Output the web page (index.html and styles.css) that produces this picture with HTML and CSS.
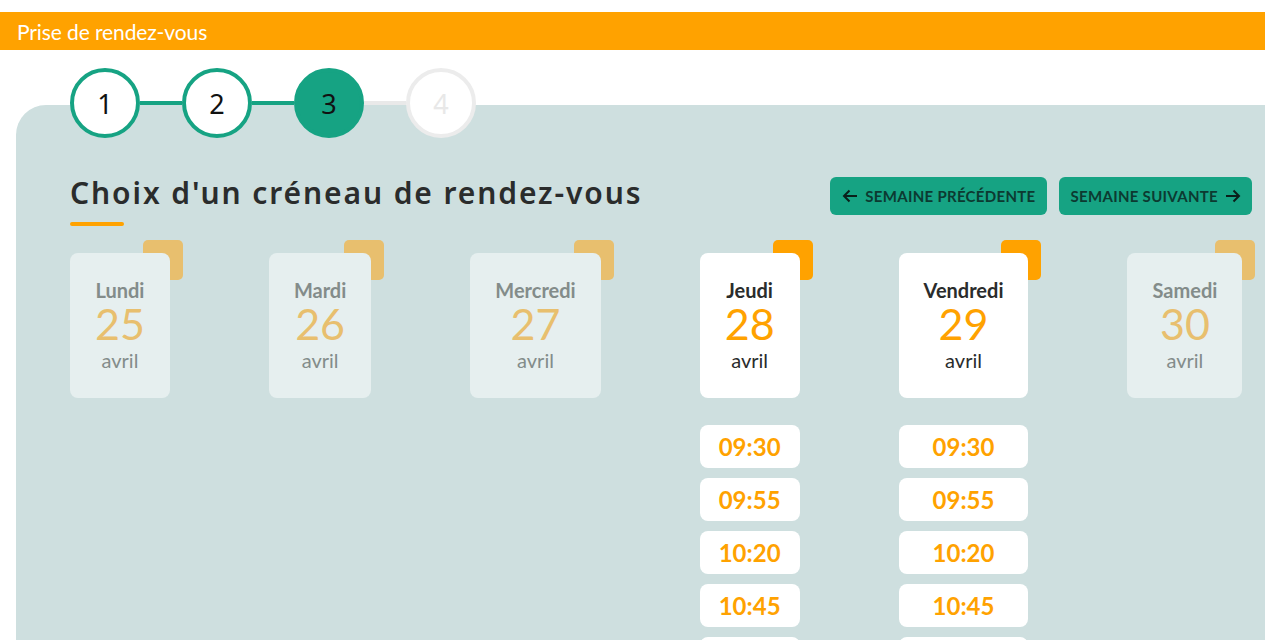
FILE: index.html
```html
<!DOCTYPE html>
<html lang="fr">
<head>
<meta charset="utf-8">
<title>Prise de rendez-vous</title>
<link rel="stylesheet" href="styles.css">
</head>
<body>
<header class="topbar">Prise de rendez-vous</header>

<div class="stepper">
  <div class="step done">1</div>
  <div class="step-line done"></div>
  <div class="step done">2</div>
  <div class="step-line done"></div>
  <div class="step current">3</div>
  <div class="step-line"></div>
  <div class="step todo">4</div>
</div>

<main class="panel">
  <div class="title-row">
    <h1 class="title">Choix d'un créneau de rendez-vous</h1>
    <div class="week-nav">
      <button class="btn"><svg class="arrow" viewBox="0 0 16 14" width="16" height="14"><path d="M15 7H2M7.5 1.5L2 7l5.5 5.5" fill="none" stroke="currentColor" stroke-width="2"/></svg>SEMAINE PRÉCÉDENTE</button>
      <button class="btn">SEMAINE SUIVANTE<svg class="arrow" viewBox="0 0 16 14" width="16" height="14"><path d="M1 7h13M8.5 1.5L14 7l-5.5 5.5" fill="none" stroke="currentColor" stroke-width="2"/></svg></button>
    </div>
  </div>
  <div class="title-bar"></div>

  <div class="days">
    <div class="day">
      <div class="card"><div class="d-name">Lundi</div><div class="d-num">25</div><div class="d-month">avril</div></div>
    </div>
    <div class="day">
      <div class="card"><div class="d-name">Mardi</div><div class="d-num">26</div><div class="d-month">avril</div></div>
    </div>
    <div class="day">
      <div class="card"><div class="d-name">Mercredi</div><div class="d-num">27</div><div class="d-month">avril</div></div>
    </div>
    <div class="day">
      <div class="card active"><div class="d-name">Jeudi</div><div class="d-num">28</div><div class="d-month">avril</div></div>
      <div class="slots">
        <div class="slot">09:30</div>
        <div class="slot">09:55</div>
        <div class="slot">10:20</div>
        <div class="slot">10:45</div>
        <div class="slot">11:10</div>
      </div>
    </div>
    <div class="day">
      <div class="card active"><div class="d-name">Vendredi</div><div class="d-num">29</div><div class="d-month">avril</div></div>
      <div class="slots">
        <div class="slot">09:30</div>
        <div class="slot">09:55</div>
        <div class="slot">10:20</div>
        <div class="slot">10:45</div>
        <div class="slot">11:10</div>
      </div>
    </div>
    <div class="day">
      <div class="card"><div class="d-name">Samedi</div><div class="d-num">30</div><div class="d-month">avril</div></div>
    </div>
    <div class="day">
      <div class="card"><div class="d-name">Dimanche</div><div class="d-num">1</div><div class="d-month">mai</div></div>
    </div>
  </div>
</main>
</body>
</html>
```

FILE: styles.css
```css
html, body {
  margin: 0;
  padding: 0;
}
body {
  padding-top: 12px;
  background: #ffffff;
  font-family: Lato, "Noto Sans", sans-serif;
  overflow: hidden;
  height: 628px;
}

.topbar {
  height: 38px;
  line-height: 40px;
  background: #ffa200;
  color: #ffffff;
  padding-left: 17px;
  font-family: Lato, sans-serif;
  font-size: 21px;
  letter-spacing: -0.1px;
}

.stepper {
  position: relative;
  z-index: 1;
  display: flex;
  align-items: center;
  width: max-content;
  margin: 18px 0 0 70px;
  height: 70px;
}
.step {
  width: 70px;
  height: 70px;
  box-sizing: border-box;
  border-radius: 50%;
  border: 4px solid #16a383;
  background: #ffffff;
  display: flex;
  align-items: center;
  justify-content: center;
  font-family: "Noto Sans", sans-serif;
  font-size: 27px;
  color: #111111;
}
.step.current {
  background: #16a383;
}
.step.todo {
  border-color: #ececec;
  color: #e8e8e8;
}
.step-line {
  width: 42px;
  height: 4px;
  background: #e9e9e9;
}
.step-line.done {
  background: #16a383;
}

.panel {
  position: relative;
  z-index: 0;
  margin: -33px 0 0 16px;
  background: #cedfdf;
  border-top-left-radius: 30px;
  padding: 72px 13px 40px 54px;
  overflow: hidden;
  min-height: 500px;
}

.title-row {
  display: flex;
  justify-content: space-between;
  align-items: center;
  height: 38px;
}
.title {
  margin: 0 0 7px 0;
  font-family: "Noto Sans", sans-serif;
  font-weight: 600;
  font-size: 30px;
  letter-spacing: 1.9px;
  line-height: 38px;
  color: #2a2c2c;
}
.week-nav {
  display: flex;
  gap: 12px;
}
.btn {
  height: 38px;
  border: none;
  border-radius: 6px;
  background: #16a383;
  color: #0c3a31;
  font-family: Lato, sans-serif;
  font-weight: 700;
  font-size: 15px;
  padding: 0 11px 0 12px;
  display: inline-flex;
  align-items: center;
  gap: 7px;
  letter-spacing: 0.3px;
}
.arrow {
  color: #0a1f1a;
}

.title-bar {
  width: 54px;
  height: 4px;
  border-radius: 2px;
  background: #ffa200;
  margin-top: 7px;
}

.days {
  display: flex;
  align-items: flex-start;
  gap: 99px;
  margin-top: 27px;
}
.day {
  flex-shrink: 0;
  display: flex;
  flex-direction: column;
}
.card {
  position: relative;
  background: #e6efef;
  border-radius: 8px;
  padding: 25px 25px 24px;
  text-align: center;
  color: #838c8a;
}
.card::before {
  content: "";
  position: absolute;
  top: -13px;
  right: -13px;
  width: 40px;
  height: 40px;
  border-radius: 5px;
  background: #e8bf6e;
  z-index: -1;
}
.card.active {
  background: #ffffff;
  color: #2a2c2c;
}
.card.active::before {
  background: #ffa200;
}
.d-name {
  font-size: 20px;
  font-weight: 700;
  line-height: 24px;
}
.d-num {
  font-size: 43px;
  line-height: 44px;
  color: #e8bf6e;
}
.card.active .d-num {
  color: #ffa200;
}
.d-month {
  font-size: 20px;
  line-height: 28px;
}

.slots {
  display: flex;
  flex-direction: column;
  gap: 10px;
  margin-top: 27px;
}
.slot {
  height: 43px;
  line-height: 44px;
  background: #ffffff;
  border-radius: 8px;
  text-align: center;
  color: #ffa200;
  font-weight: 700;
  font-size: 24px;
}
```
